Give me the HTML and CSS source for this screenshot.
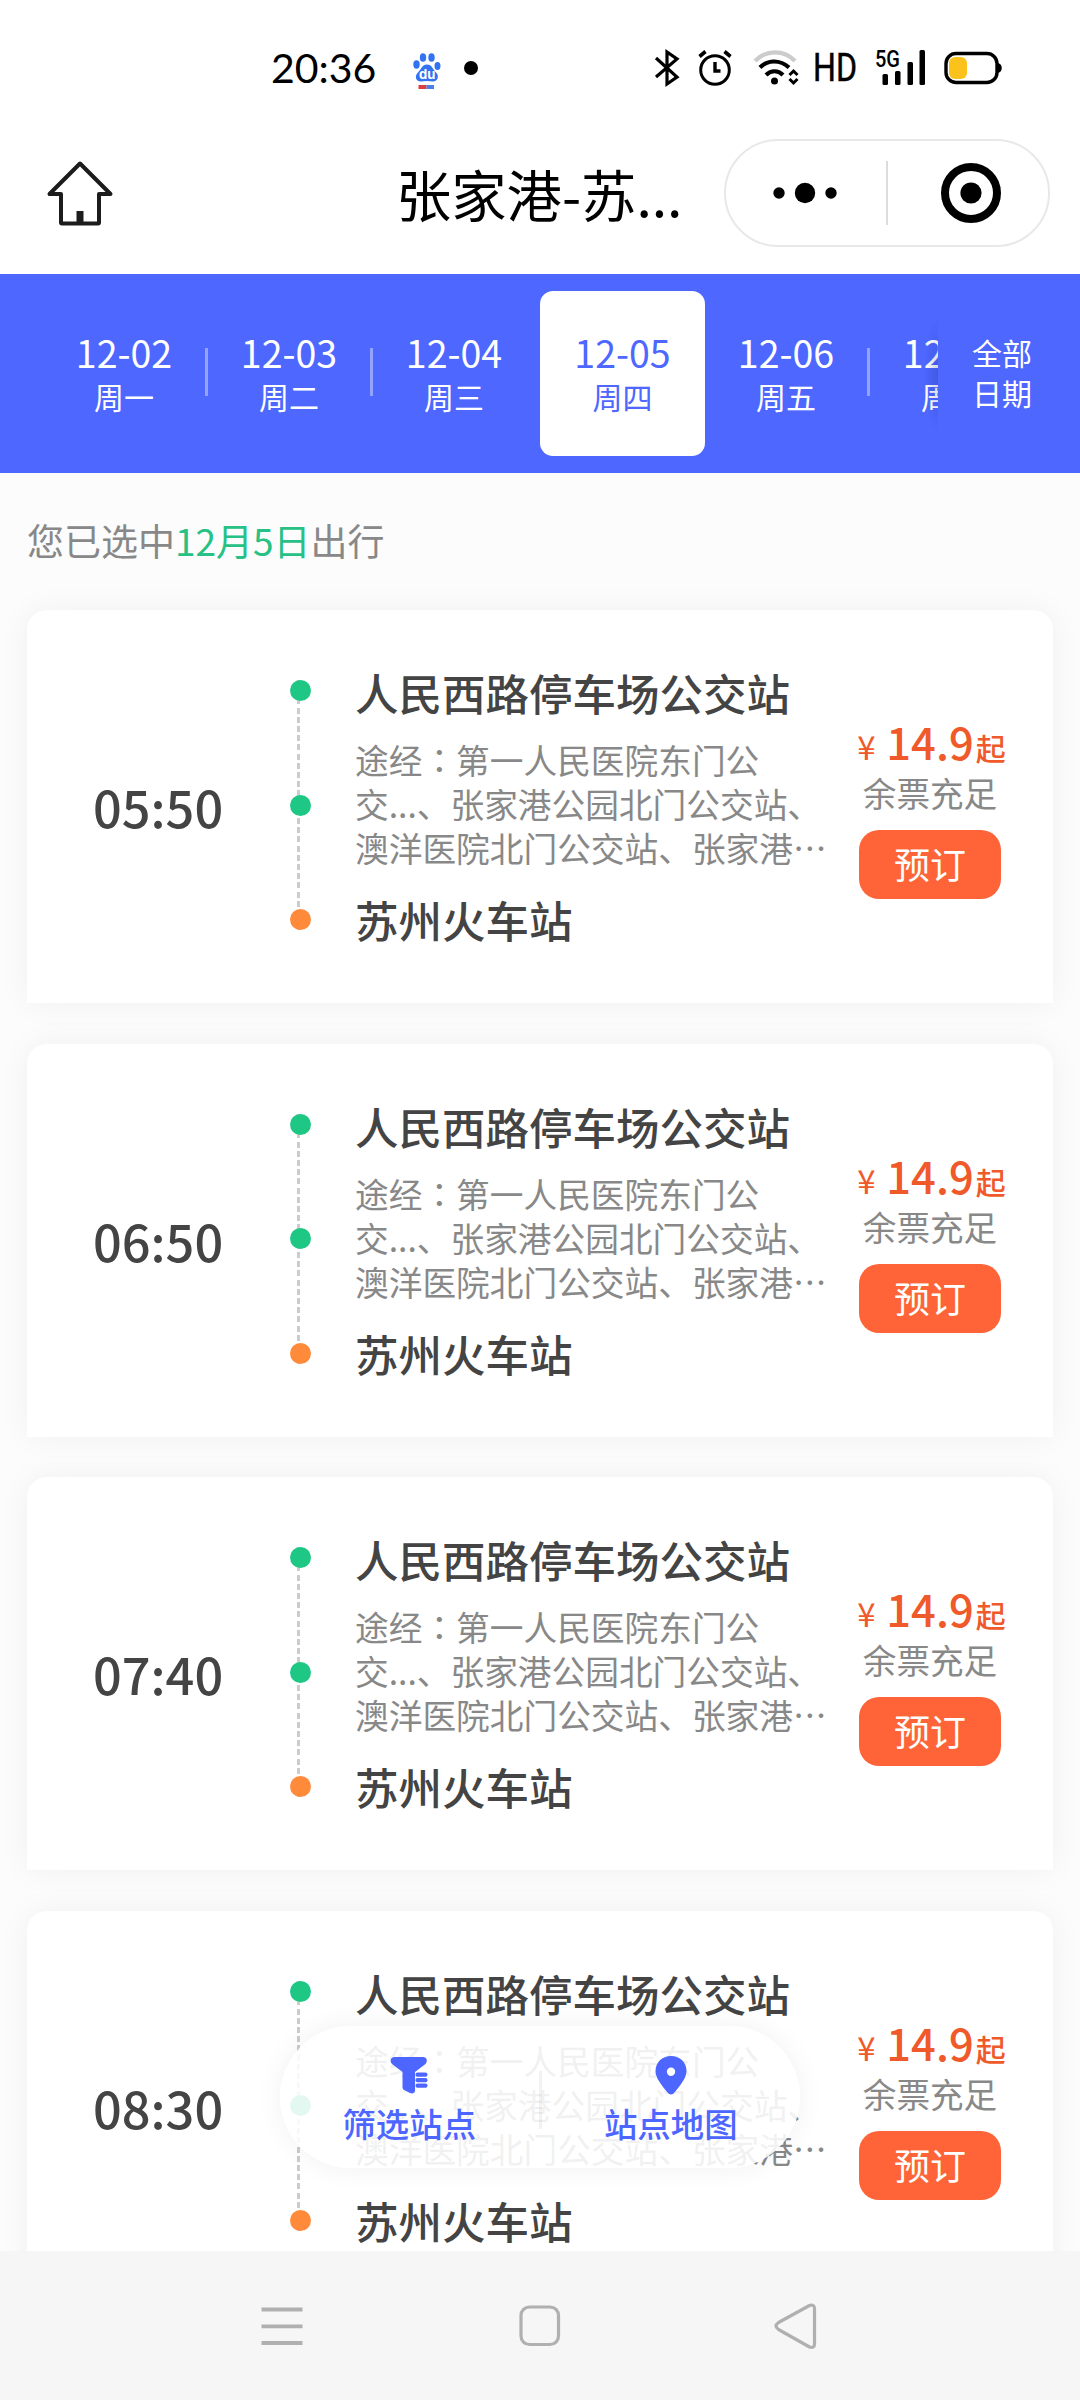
FILE: index.html
```html
<!DOCTYPE html>
<html lang="zh-CN">
<head>
<meta charset="utf-8">
<title>张家港-苏州</title>
<link rel="stylesheet" href="styles.css">
</head>
<body>
<div class="app">
  <div class="status">
    <span class="clock">20:36</span>
    <svg class="paw" width="28" height="36" viewBox="0 0 28 36">
      <g fill="#3173f0">
        <ellipse cx="10" cy="4.5" rx="3.2" ry="4.3"/><ellipse cx="18.5" cy="4.5" rx="3.2" ry="4.3"/>
        <ellipse cx="3.5" cy="11.5" rx="3.2" ry="4.2"/><ellipse cx="24.5" cy="13" rx="3" ry="4"/>
        <path d="M14 11.5c5 0 6 5 9 8 4 4 1 9-3 9-2 0-4-.6-6-.6s-4 .6-6 .6c-5 0-7-5-3-9 3-3 4-8 9-8z"/>
      </g>
      <text x="6" y="26" font-family="Inter, sans-serif" font-size="13" font-weight="700" fill="#fff">du</text>
      <path d="M5.500 32h8v4h-8z" fill="#dc3d41"/><path d="M13.500 32h7.500v4h-7.500z" fill="#4c7fe8"/>
    </svg>
    <span class="notice"></span>
    <div class="tray">
      <svg width="26" height="36" viewBox="0 0 26 36" fill="none" stroke="#000" stroke-width="3.200"><path d="M2 8l21 19-10 7V2l10 7L2 27"/></svg>
      <svg class="alarm" width="34" height="36" viewBox="0 0 34 36" fill="none" stroke="#000" stroke-width="3"><circle cx="17" cy="20" r="14.300"/><path d="M17 12v9h5.500" stroke-width="3.400"/><path d="M1.500 6.500l6-5M26.500 1.500l6 5" stroke-width="3.600"/></svg>
      <svg class="wifi" width="46" height="36" viewBox="0 0 46 36" fill="none" stroke-width="4.200"><path d="M2 11C13-.5 31-.5 42 11" stroke="#ccc"/><path d="M7 17.500c8-8 20-8 29 0M13 25c5-5 12-5 17 0" stroke="#000"/><circle cx="21.500" cy="31" r="3.500" fill="#000"/><path d="M36.500 25l4-4 4 4M36.500 29l4 4 4-4" stroke="#000" stroke-width="3"/></svg>
      <svg class="hd" width="42" height="36" viewBox="0 0 42 36"><text x="-2" y="31" font-family="Roboto, sans-serif" font-size="38" stroke="#000" stroke-width=".5" textLength="44" lengthAdjust="spacingAndGlyphs">HD</text></svg>
      <svg class="signal" width="50" height="36" viewBox="0 0 50 36"><text x="-1" y="17" font-family="Roboto, sans-serif" font-size="23" font-weight="500" textLength="25" lengthAdjust="spacingAndGlyphs">5G</text><g><rect x="6.500" y="24" width="5.500" height="11" rx="1.500"/><rect x="19" y="21" width="5.500" height="14" rx="1.500"/><rect x="31.500" y="12" width="5.500" height="23" rx="1.500"/><rect x="43.500" y="0" width="5.500" height="35" rx="1.500"/></g></svg>
      <svg class="battery" width="58" height="36" viewBox="0 0 58 36"><rect x="2" y="3.500" width="51" height="29" rx="10" fill="none" stroke="#000" stroke-width="3.400"/><path d="M54 13c5 1 5 9 0 10z"/><rect x="5" y="7" width="18" height="22" rx="6" fill="#fcc21c"/></svg>
    </div>
  </div>

  <div class="titlebar">
    <svg class="home" width="68" height="66" viewBox="0 0 68 66"><path d="M34 3.500L3.500 34H15v28.500q0 1 1 1h36q1 0 1-1V34h11.500z" fill="none" stroke="#1c1c1c" stroke-width="4" stroke-linejoin="round"/><path d="M30.500 51h7v12h-7z" fill="#1c1c1c"/></svg>
    <h1 class="title">张家港-苏...</h1>
    <div class="capsule">
      <svg class="more" width="64" height="24" viewBox="0 0 64 24"><circle cx="6" cy="12" r="5.700"/><circle cx="32" cy="12" r="10.200"/><circle cx="58" cy="12" r="5.700"/></svg>
      <span class="capsule-line"></span>
      <svg class="target" width="62" height="62" viewBox="0 0 62 62"><circle cx="31" cy="31" r="26" fill="none" stroke="#000" stroke-width="8"/><circle cx="31" cy="31" r="10.600"/></svg>
    </div>
  </div>

  <div class="dates">
    <div class="days">
      <div class="day"><span class="date">12-02</span><span class="week">周一</span></div>
      <div class="day"><span class="date">12-03</span><span class="week">周二</span></div>
      <div class="day last"><span class="date">12-04</span><span class="week">周三</span></div>
      <div class="day active"><span class="date">12-05</span><span class="week">周四</span></div>
      <div class="day"><span class="date">12-06</span><span class="week">周五</span></div>
      <div class="day"><span class="date">12-07</span><span class="week">周六</span></div>
    </div>
    <div class="all"><span>全部</span><span>日期</span></div>
  </div>

  <div class="content">
    <p class="chosen">您已选中<em>12月5日</em>出行</p>
    <div class="list">
      <div class="card">
        <div class="time">05:50</div>
        <div class="track"><i></i><i></i><i class="end"></i></div>
        <div class="stops">
          <div class="stop">人民西路停车场公交站</div>
          <div class="via">途经<span class="colon" lang="zh-TW">：</span>第一人民医院东门公<br>交...、张家港公园北门公交站、<br>澳洋医院北门公交站、张家港…</div>
          <div class="stop">苏州火车站</div>
        </div>
        <div class="buy">
          <div class="price"><small class="yen">¥</small><b>14.9</b><small>起</small></div>
          <div class="stock">余票充足</div>
          <div class="book">预订</div>
        </div>
      </div>
      <div class="card">
        <div class="time">06:50</div>
        <div class="track"><i></i><i></i><i class="end"></i></div>
        <div class="stops">
          <div class="stop">人民西路停车场公交站</div>
          <div class="via">途经<span class="colon" lang="zh-TW">：</span>第一人民医院东门公<br>交...、张家港公园北门公交站、<br>澳洋医院北门公交站、张家港…</div>
          <div class="stop">苏州火车站</div>
        </div>
        <div class="buy">
          <div class="price"><small class="yen">¥</small><b>14.9</b><small>起</small></div>
          <div class="stock">余票充足</div>
          <div class="book">预订</div>
        </div>
      </div>
      <div class="card">
        <div class="time">07:40</div>
        <div class="track"><i></i><i></i><i class="end"></i></div>
        <div class="stops">
          <div class="stop">人民西路停车场公交站</div>
          <div class="via">途经<span class="colon" lang="zh-TW">：</span>第一人民医院东门公<br>交...、张家港公园北门公交站、<br>澳洋医院北门公交站、张家港…</div>
          <div class="stop">苏州火车站</div>
        </div>
        <div class="buy">
          <div class="price"><small class="yen">¥</small><b>14.9</b><small>起</small></div>
          <div class="stock">余票充足</div>
          <div class="book">预订</div>
        </div>
      </div>
      <div class="card">
        <div class="time">08:30</div>
        <div class="track"><i></i><i></i><i class="end"></i></div>
        <div class="stops">
          <div class="stop">人民西路停车场公交站</div>
          <div class="via">途经<span class="colon" lang="zh-TW">：</span>第一人民医院东门公<br>交...、张家港公园北门公交站、<br>澳洋医院北门公交站、张家港…</div>
          <div class="stop">苏州火车站</div>
        </div>
        <div class="buy">
          <div class="price"><small class="yen">¥</small><b>14.9</b><small>起</small></div>
          <div class="stock">余票充足</div>
          <div class="book">预订</div>
        </div>
      </div>
    </div>
    <div class="float">
      <div class="tool">
        <svg width="38" height="40" viewBox="0 0 38 40" fill="#4c66ff"><path d="M4.500 2h28.500c4 0 5 4 2.500 7L25 17v18.500c0 3-3 3.500-5 2.500l-5-2.500c-1.500-.8-2.500-1.500-2.500-3.500V17L2 9C-.5 6 .5 2 4.500 2z"/><rect x="25.500" y="17.500" width="12" height="4.300" rx="2"/><rect x="25.500" y="23" width="12" height="4.300" rx="2"/><rect x="25.500" y="28.500" width="12" height="4.300" rx="2"/></svg>
        <span>筛选站点</span>
      </div>
      <span class="float-line"></span>
      <div class="tool">
        <svg width="38" height="40" viewBox="0 0 38 40" fill="#4c66ff"><path fill-rule="evenodd" d="M19 1C10 1 3.500 7.500 3.500 16c0 7 6 14 12 21.500 2 2.500 5 2.500 7 0C28.500 30 34.500 23 34.500 16 34.500 7.500 28 1 19 1zm0 11.500a4.200 4.200 0 1 1 0 8.400 4.200 4.200 0 0 1 0-8.400z"/></svg>
        <span>站点地图</span>
      </div>
    </div>
  </div>

  <div class="navbar">
    <svg width="44" height="48" viewBox="0 0 44 48" fill="none" stroke="#b0b0b0" stroke-width="3.800"><path d="M1.500 7.500h41M1.500 24.300h41M1.500 41h41"/></svg>
    <svg width="44" height="48" viewBox="0 0 44 48" fill="none" stroke="#b0b0b0" stroke-width="3.200"><rect x="4" y="5" width="37.500" height="37.500" rx="8.500"/></svg>
    <svg width="44" height="48" viewBox="0 0 44 48" fill="none" stroke="#b0b0b0" stroke-width="3.200" stroke-linejoin="round"><path d="M35.500 3.500L4.500 20.500q-5 3.500 0 7l31 17.500q5 1.500 5-3V6.500q0-4.500-5-3z"/></svg>
  </div>
</div>
</body>
</html>
```
FILE: styles.css
```css
* { box-sizing: border-box; margin: 0; padding: 0; }
body {
  width: 1080px;
  height: 2400px;
  overflow: hidden;
  background: #fff;
  font-family: "Noto Sans CJK SC", sans-serif;
}
svg { display: block; flex: none; overflow: visible; }
i, em { font-style: normal; }

.app { display: flex; flex-direction: column; height: 2400px; }

.status { display: flex; align-items: center; height: 124px; padding: 12px 78px 0 271px; }
.clock { width: 142px; font: 400 41px/50px Lato, sans-serif; color: #000; }
.paw { margin-top: 5px; }
.notice { width: 14px; height: 14px; margin-left: 23px; border-radius: 50%; background: #000; }
.tray { display: flex; align-items: center; margin-left: auto; }
.alarm { margin-left: 18px; }
.wifi { margin-left: 21px; }
.hd { margin-left: 16px; }
.signal { margin-left: 19px; }
.battery { margin-left: 18px; }

.titlebar { display: flex; align-items: center; height: 150px; padding: 0 30px 12px 46px; }
.title { width: 328px; margin-left: 282px; font-size: 55.300px; font-weight: 400; line-height: 80px; color: #000; white-space: nowrap; }
.capsule { display: flex; align-items: center; width: 326px; height: 108px; padding-left: 47px; border: 2px solid #e8e8e8; border-radius: 54px; }
.capsule-line { width: 2px; height: 64px; margin-left: 49px; background: #dcdcdc; }
.target { margin-left: 52px; }

.dates { display: flex; height: 199px; background: #4d67ff; color: #fff; }
.days { display: flex; align-items: center; width: 938px; padding-left: 43px; overflow: hidden; }
.day { position: relative; display: flex; flex: none; flex-direction: column; align-items: center; justify-content: center; width: 165px; height: 165px; padding: 0 3px 2px 0; }
.day::after { content: ""; position: absolute; right: 0; top: 57px; width: 3px; height: 48px; background: rgba(255, 255, 255, .4); }
.day.last::after, .day.active::after { display: none; }
.day.active { margin-left: 2px; padding-right: 0; border-radius: 13px; background: #fff; color: #4d67ff; }
.date { font-size: 37.500px; line-height: 46px; }
.week { font-size: 30px; line-height: 42px; }
.all { position: relative; display: flex; flex: 1; flex-direction: column; justify-content: center; padding: 0 0 3px 34px; font-size: 30px; line-height: 40px; }
.all::before { content: ""; position: absolute; left: -14px; top: 44px; width: 14px; height: 114px; background: radial-gradient(ellipse at right center, rgba(30, 40, 120, .22), rgba(30, 40, 120, 0) 70%); }

.content { position: relative; flex: 1; overflow: hidden; background: #fcfcfc; }
.chosen { padding: 40px 27px 0; font-size: 37px; line-height: 54px; color: #888; }
.chosen em { color: #27c185; }
.list { display: flex; flex-direction: column; gap: 40.670px; padding: 43px 27px 0; }

.card { display: flex; flex: none; height: 393px; border-radius: 20px 20px 0 0; background: #fff; box-shadow: 0 0 32px rgba(0, 0, 0, .05); }
.time { display: flex; align-items: center; width: 263px; padding: 0 0 1px 66px; font-size: 50.500px; font-weight: 500; color: #444; }
.track { display: flex; flex-direction: column; justify-content: space-between; width: 21px; height: 250px; margin-top: 70px; background: repeating-linear-gradient(#ccc 0 6px, transparent 6px 9.200px) 7px 0 / 3px 100% no-repeat; }
.track i { width: 21px; height: 21px; border-radius: 50%; background: #1fc785; }
.track .end { background: #ff8a3a; }
.stops { width: 518px; padding: 53px 0 0 44px; white-space: nowrap; }
.stop { font-size: 43.500px; font-weight: 500; line-height: 60px; color: #444; }
.via { margin: 15px 0 20px; font-size: 33.700px; line-height: 44px; color: #888; }
.colon { font-family: "Noto Sans CJK TC", sans-serif; }
.buy { display: flex; flex-direction: column; align-items: center; width: 150px; margin-left: 26px; padding-top: 105px; }
.price { display: flex; align-items: baseline; height: 54px; padding-left: 3px; line-height: 54px; color: #f0592a; white-space: nowrap; }
.price b { margin: 0 2px 0 9px; font-size: 43.500px; font-weight: 500; }
.price small { font-size: 30px; font-weight: 500; }
.price .yen { width: 20px; font-size: 33px; font-weight: 400; }
.stock { margin-top: 2px; font-size: 33.600px; line-height: 44px; color: #888; }
.book { width: 142px; height: 69px; margin-top: 15px; border-radius: 20px; background: #ff6439; color: #fff; font-size: 36px; line-height: 67px; text-align: center; }

.float { position: absolute; left: 280px; top: 1553px; display: flex; align-items: center; width: 520px; height: 142px; padding-top: 5px; border-radius: 71px; background: rgba(255, 255, 255, .88); box-shadow: 0 0 28px rgba(0, 0, 0, .06); }
.tool { display: flex; flex: 1; flex-direction: column; align-items: center; gap: 6px; color: #4c66ff; font-size: 33.400px; font-weight: 500; line-height: 44px; }
.float-line { width: 3px; height: 58px; background: rgba(0, 0, 0, .05); }

.navbar { display: flex; align-items: center; justify-content: space-between; height: 149px; padding: 0 262px 0 260px; background: #f6f6f6; }
```
